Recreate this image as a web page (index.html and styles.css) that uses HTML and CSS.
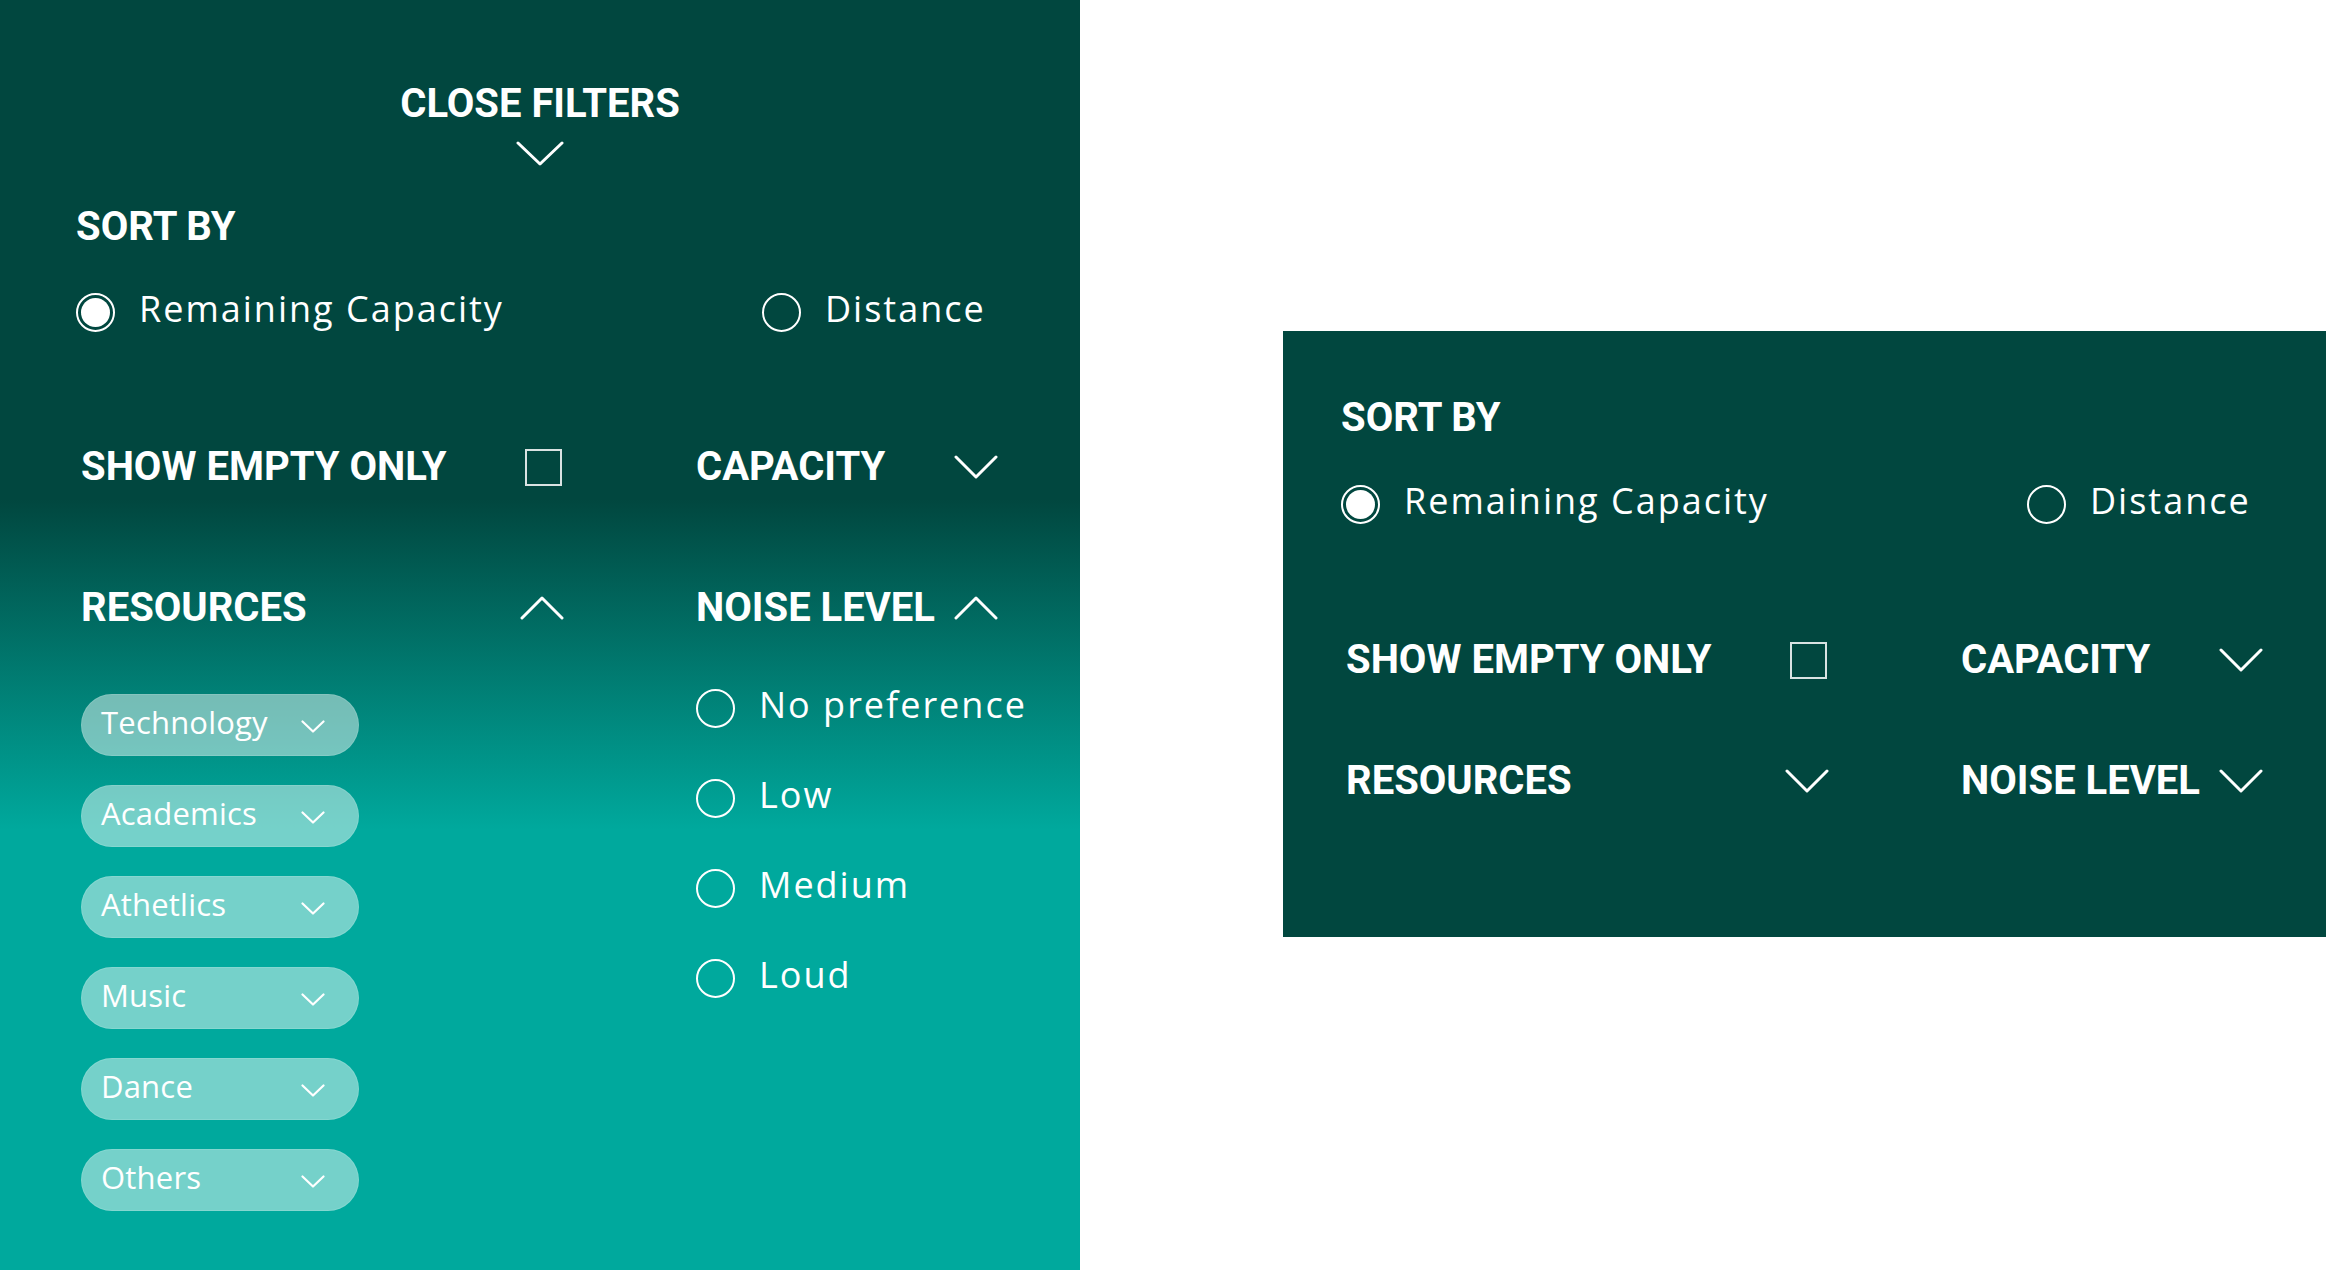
FILE: index.html
```html
<!DOCTYPE html>
<html lang="en">
<head>
<meta charset="utf-8">
<title>Filters</title>
<link rel="stylesheet" href="styles.css">
</head>
<body>
<section class="panel panel--open">
  <div class="close">
    <div class="close__label">CLOSE FILTERS</div>
    <svg class="close__icon" viewBox="0 0 48 25" width="48" height="25"><path d="M2 2 L24 23 L46 2" /></svg>
  </div>

  <h2 class="heading sort-heading">SORT BY</h2>
  <div class="sort">
    <label class="radio-row"><span class="radio radio--on"></span><span class="radio-text">Remaining Capacity</span></label>
    <label class="radio-row"><span class="radio"></span><span class="radio-text">Distance</span></label>
  </div>

  <div class="filters filters--open">
    <div class="cell">
      <span class="heading">SHOW EMPTY ONLY</span>
      <span class="checkbox"></span>
    </div>
    <div class="cell">
      <span class="heading">CAPACITY</span>
      <svg class="chev" viewBox="0 0 44 24" width="44" height="24"><path d="M2 2 L22 22 L42 2" /></svg>
    </div>
    <div class="group">
      <div class="cell">
        <span class="heading">RESOURCES</span>
        <svg class="chev" viewBox="0 0 44 24" width="44" height="24"><path d="M2 22 L22 2 L42 22" /></svg>
      </div>
      <ul class="pills">
        <li class="pill"><span class="pill__text">Technology</span><svg class="pill__chev" viewBox="0 0 24 13" width="24" height="13"><path d="M1.5 1.5 L12 11.5 L22.5 1.5" /></svg></li>
        <li class="pill"><span class="pill__text">Academics</span><svg class="pill__chev" viewBox="0 0 24 13" width="24" height="13"><path d="M1.5 1.5 L12 11.5 L22.5 1.5" /></svg></li>
        <li class="pill"><span class="pill__text">Athetlics</span><svg class="pill__chev" viewBox="0 0 24 13" width="24" height="13"><path d="M1.5 1.5 L12 11.5 L22.5 1.5" /></svg></li>
        <li class="pill"><span class="pill__text">Music</span><svg class="pill__chev" viewBox="0 0 24 13" width="24" height="13"><path d="M1.5 1.5 L12 11.5 L22.5 1.5" /></svg></li>
        <li class="pill"><span class="pill__text">Dance</span><svg class="pill__chev" viewBox="0 0 24 13" width="24" height="13"><path d="M1.5 1.5 L12 11.5 L22.5 1.5" /></svg></li>
        <li class="pill"><span class="pill__text">Others</span><svg class="pill__chev" viewBox="0 0 24 13" width="24" height="13"><path d="M1.5 1.5 L12 11.5 L22.5 1.5" /></svg></li>
      </ul>
    </div>
    <div class="group">
      <div class="cell">
        <span class="heading">NOISE LEVEL</span>
        <svg class="chev" viewBox="0 0 44 24" width="44" height="24"><path d="M2 22 L22 2 L42 22" /></svg>
      </div>
      <div class="noise">
        <label class="radio-row"><span class="radio"></span><span class="radio-text">No preference</span></label>
        <label class="radio-row"><span class="radio"></span><span class="radio-text">Low</span></label>
        <label class="radio-row"><span class="radio"></span><span class="radio-text">Medium</span></label>
        <label class="radio-row"><span class="radio"></span><span class="radio-text">Loud</span></label>
      </div>
    </div>
  </div>
</section>

<section class="panel panel--closed">
  <h2 class="heading sort-heading">SORT BY</h2>
  <div class="sort">
    <label class="radio-row"><span class="radio radio--on"></span><span class="radio-text">Remaining Capacity</span></label>
    <label class="radio-row"><span class="radio"></span><span class="radio-text">Distance</span></label>
  </div>
  <div class="filters filters--closed">
    <div class="cell">
      <span class="heading">SHOW EMPTY ONLY</span>
      <span class="checkbox"></span>
    </div>
    <div class="cell">
      <span class="heading">CAPACITY</span>
      <svg class="chev" viewBox="0 0 44 24" width="44" height="24"><path d="M2 2 L22 22 L42 2" /></svg>
    </div>
    <div class="cell">
      <span class="heading">RESOURCES</span>
      <svg class="chev" viewBox="0 0 44 24" width="44" height="24"><path d="M2 2 L22 22 L42 2" /></svg>
    </div>
    <div class="cell">
      <span class="heading">NOISE LEVEL</span>
      <svg class="chev" viewBox="0 0 44 24" width="44" height="24"><path d="M2 2 L22 22 L42 2" /></svg>
    </div>
  </div>
</section>
</body>
</html>
```

FILE: styles.css
```css
* { box-sizing: border-box; }

html, body {
  margin: 0;
  padding: 0;
}

body {
  width: 2326px;
  height: 1270px;
  overflow: hidden;
  background: #ffffff;
  display: flex;
  align-items: flex-start;
  color: #ffffff;
  font-family: "Open Sans", "Liberation Sans", sans-serif;
}

.panel {
  flex: none;
}

.panel--open {
  width: 1080px;
  height: 1270px;
  padding: 81px 0 0 76px;
  background: linear-gradient(to bottom, #01473f 0px, #01473f 500px, #00a99d 830px, #00a99d 100%);
}

.panel--closed {
  width: 1043px;
  margin: 331px 0 0 203px;
  padding: 63px 0 132px 58px;
  background: #01473f;
}

.heading {
  margin: 0;
  font-family: Roboto, "Liberation Sans", sans-serif;
  font-weight: 700;
  font-size: 40px;
  line-height: 48px;
  color: #ffffff;
  white-space: nowrap;
}

/* close filters */
.close {
  width: 928px;
  display: flex;
  flex-direction: column;
  align-items: center;
}

.close__label {
  font-family: Roboto, "Liberation Sans", sans-serif;
  font-weight: 700;
  font-size: 40px;
  line-height: 46px;
}

.close__icon {
  display: block;
  margin-top: 14px;
}

.close__icon path,
.chev path,
.pill__chev path {
  fill: none;
  stroke: #ffffff;
  stroke-width: 3;
  stroke-linecap: round;
  stroke-linejoin: round;
}

.pill__chev path { stroke-width: 2.2; }

.panel--open .sort-heading { margin-top: 37px; }

/* sort */
.sort {
  display: grid;
  grid-template-columns: 686px auto;
  margin-top: 41px;
}

.panel--closed .sort { margin-top: 42px; }

.radio-row {
  display: flex;
  align-items: center;
  height: 40px;
  gap: 24px;
}

.radio {
  flex: none;
  width: 39px;
  height: 39px;
  border: 2px solid #ffffff;
  border-radius: 50%;
  position: relative;
}

.radio--on::after {
  content: "";
  position: absolute;
  inset: 3px;
  border-radius: 50%;
  background: #ffffff;
}

.radio-text {
  font-size: 36px;
  line-height: 40px;
  letter-spacing: 2px;
  padding-bottom: 6px;
  white-space: nowrap;
}

/* filters */
.filters {
  display: grid;
  grid-template-columns: 483px 302px;
  column-gap: 132px;
  margin-top: 111px;
  margin-left: 5px;
  align-items: start;
}

.filters--open { row-gap: 93px; }
.filters--closed { row-gap: 73px; margin-top: 112px; }

.cell {
  display: flex;
  align-items: center;
  justify-content: space-between;
  height: 48px;
}

.checkbox {
  width: 37px;
  height: 37px;
  margin-right: 2px;
  border: 2px solid rgba(255, 255, 255, 0.85);
}

.chev { display: block; }

.pills {
  list-style: none;
  margin: 62px 0 0;
  padding: 0;
  display: flex;
  flex-direction: column;
  gap: 29px;
}

.pill {
  width: 278px;
  height: 62px;
  border-radius: 31px;
  background: rgba(248, 255, 253, 0.47);
  border: 1px solid rgba(255, 255, 255, 0.12);
  display: flex;
  align-items: center;
  justify-content: space-between;
  padding: 0 33px 0 19px;
  font-size: 31px;
  color: #ffffff;
}

.pill__text {
  line-height: 40px;
  padding-bottom: 6px;
  letter-spacing: 0.2px;
}

.pill__chev { display: block; margin-top: 2px; }

.noise {
  margin-top: 56px;
  display: flex;
  flex-direction: column;
  gap: 50px;
}
```
